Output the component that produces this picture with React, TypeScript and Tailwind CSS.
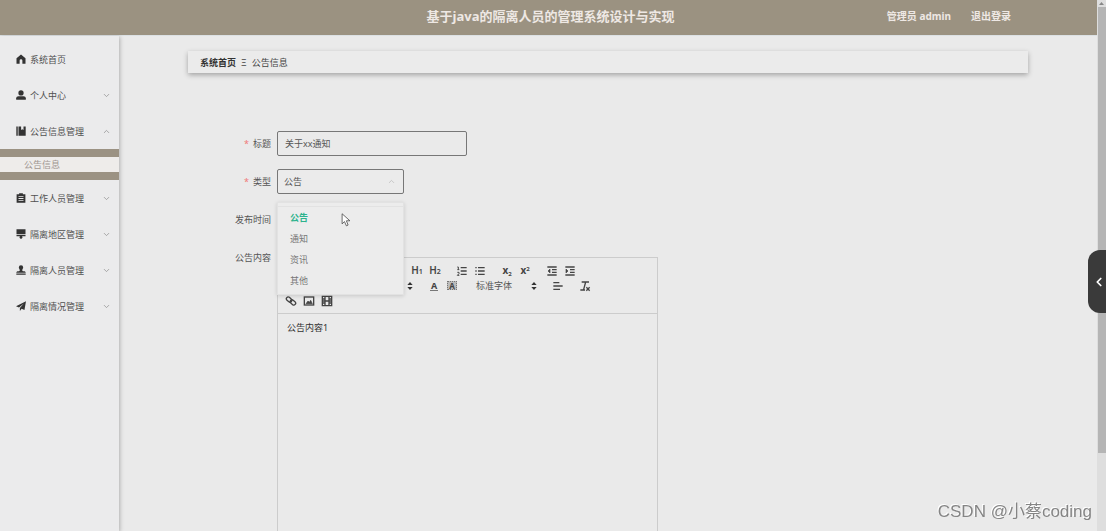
import { useState } from "react";
import type { ReactNode } from "react";
import { ChevronDown, ChevronLeft, ChevronUp } from "lucide-react";

type MenuItem = {
  label: string;
  icon: ReactNode;
  expandable?: boolean;
  children?: string[];
};

const menu: MenuItem[] = [
  {
    label: "系统首页",
    icon: <path d="M8 .8.800 6.800V15.500h5V10.500a2.200 2.200 0 0 1 4.400 0v5h5V6.800z" />,
  },
  {
    label: "个人中心",
    expandable: true,
    icon: (
      <>
        <circle cx="8" cy="4.600" r="4.200" />
        <path d="M.3 15.500v-2.200c0-2 1.600-3.200 3.600-3.200h8.200c2 0 3.600 1.200 3.600 3.200v2.200z" />
      </>
    ),
  },
  {
    label: "公告信息管理",
    expandable: true,
    children: ["公告信息"],
    icon: <path d="M.5.800h2.300V15.500H.500zM4 .800h4.200v5.700l1.900-1.500L12 6.500V.800h3.500V15.500H4z" />,
  },
  {
    label: "工作人员管理",
    expandable: true,
    icon: (
      <path
        fillRule="evenodd"
        d="M5 .3h6V2h4v13.700H1V2h4zM4 5v1.400h8V5zm0 3v1.400h8V8zm0 3v1.400h8V11z"
      />
    ),
  },
  {
    label: "隔离地区管理",
    expandable: true,
    icon: <path d="M.8.500h14.400v7.500H.8zM.8 9.200h14.400v2.300H10v2.200h1L8 16l-3-2.300h1v-2.200H.8z" />,
  },
  {
    label: "隔离人员管理",
    expandable: true,
    icon: (
      <path d="M8 .5a3.500 3.500 0 0 1 3.500 3.500c0 1.700-1.500 2.600-1.500 4.200 0 1.300.7 1.800 2.500 1.800 1.900 0 3 .8 3 2.500H.5C.5 10.800 1.600 10 3.500 10 5.300 10 6 9.500 6 8.200 6 6.600 4.500 5.700 4.500 4A3.500 3.500 0 0 1 8 .5M.5 13.500h15v2H.5z" />
    ),
  },
  {
    label: "隔离情况管理",
    expandable: true,
    icon: <path d="M16 .3 13.500 14.500l-4.500-2-2.800 3.500v-4.700L12.500 4 4.800 10.200 0 8.500z" />,
  },
];

const types = ["公告", "通知", "资讯", "其他"];

function Sidebar() {
  return (
    <aside className="w-[119px] shrink-0 bg-[#ebebec] pt-[5px] shadow-[1px_1px_4px_rgba(0,0,0,0.25)]">
      <nav aria-label="菜单">
        <ul>
          {menu.map((item) => (
            <li key={item.label}>
              <button className="flex h-9 w-full items-center pr-2 pl-4 text-left text-[#505050]">
                <svg viewBox="0 0 16 16" className="mr-1 size-2.5 shrink-0 fill-[#333]">
                  {item.icon}
                </svg>
                <span className="flex-1">{item.label}</span>
                {item.expandable &&
                  (item.children ? (
                    <ChevronUp size={9} strokeWidth={2} className="text-[#909090]" />
                  ) : (
                    <ChevronDown size={9} strokeWidth={2} className="text-[#909090]" />
                  ))}
              </button>
              {item.children && (
                <ul className="bg-[#9b9283] py-2">
                  {item.children.map((child) => (
                    <li key={child}>
                      <a href="#notice" className="flex h-[15px] items-center bg-[#eeecea] pl-6 text-[#a09691]">
                        {child}
                      </a>
                    </li>
                  ))}
                </ul>
              )}
            </li>
          ))}
        </ul>
      </nav>
    </aside>
  );
}

function Tool({ label, children }: { label: string; children: ReactNode }) {
  return (
    <button type="button" aria-label={label} className="flex h-full w-[18px] items-center justify-center">
      {children}
    </button>
  );
}

function Glyph({ children }: { children: ReactNode }) {
  return (
    <svg viewBox="0 0 18 18" className="size-3 fill-none stroke-[#444] stroke-2">
      {children}
    </svg>
  );
}

function Arrows() {
  return (
    <svg viewBox="0 0 18 18" className="size-3 fill-[#333]">
      <path d="M5 7.500 9 3l4 4.500zM5 10.500 9 15l4-4.500z" />
    </svg>
  );
}

function Group({ children }: { children: ReactNode }) {
  return <div className="flex h-full">{children}</div>;
}

function Toolbar() {
  return (
    <div className="border-b border-[#ccc] px-1 pt-[5px] pb-1 text-[#444]">
      <div className="flex h-[15px] gap-[9px]">
        <Group>
          <Tool label="粗体">
            <Glyph><path d="M5 4h5a2.500 2.500 0 0 1 0 5H5zM5 9h6a2.500 2.500 0 0 1 0 5H5z" /></Glyph>
          </Tool>
          <Tool label="斜体">
            <Glyph><path d="M7 4h6M5 14h6M8 14l2-10" /></Glyph>
          </Tool>
          <Tool label="下划线">
            <Glyph><path d="M5 3v6a4 4 0 0 0 8 0V3M4 15.500h10" /></Glyph>
          </Tool>
          <Tool label="删除线">
            <Glyph><path d="M2 9h14M12 5c-3-2-6-1-6 1s6 3 6 6-4 3-7 1" /></Glyph>
          </Tool>
        </Group>
        <Group>
          <Tool label="引用">
            <Glyph><path d="M4 8h3v3H4zc0-3 1-4 3-4M11 8h3v3h-3zc0-3 1-4 3-4" /></Glyph>
          </Tool>
          <Tool label="代码">
            <Glyph><path d="m5 7-3 2 3 2M13 7l3 2-3 2M10 5l-2 8" /></Glyph>
          </Tool>
        </Group>
        <Group>
          <Tool label="标题 1">
            <span className="text-[10px] font-semibold">H<span className="text-[7px]">1</span></span>
          </Tool>
          <Tool label="标题 2">
            <span className="text-[10px] font-semibold">H<span className="text-[7px]">2</span></span>
          </Tool>
        </Group>
        <Group>
          <Tool label="有序列表">
            <Glyph>
              <path d="M7 4h9M7 9h9M7 14h9" />
              <path strokeWidth="1.500" d="M2 3h1.500v4M2 7h3M2 11h2.500v2L2 15.500h3" />
            </Glyph>
          </Tool>
          <Tool label="无序列表">
            <Glyph><path d="M6 4h10M6 9h10M6 14h10M2 4h2M2 9h2M2 14h2" /></Glyph>
          </Tool>
        </Group>
        <Group>
          <Tool label="下标">
            <span className="text-[10px] font-bold">x<sub className="text-[6px]">2</sub></span>
          </Tool>
          <Tool label="上标">
            <span className="text-[10px] font-bold">x<sup className="text-[6px]">2</sup></span>
          </Tool>
        </Group>
        <Group>
          <Tool label="减少缩进">
            <Glyph>
              <path d="M2 3h14M9 7h7M9 11h7M2 15h14" />
              <path className="fill-[#444]" strokeWidth="1" d="M6 6v6L3 9z" />
            </Glyph>
          </Tool>
          <Tool label="增加缩进">
            <Glyph>
              <path d="M2 3h14M9 7h7M9 11h7M2 15h14" />
              <path className="fill-[#444]" strokeWidth="1" d="M3 6v6l3-3z" />
            </Glyph>
          </Tool>
        </Group>
      </div>

      <div className="flex h-[15px] gap-[9px]">
        <button type="button" aria-label="字号" className="flex w-[62px] items-center justify-end">
          <Arrows />
        </button>
        <button type="button" aria-label="标题级别" className="flex w-[63px] items-center justify-end">
          <Arrows />
        </button>
        <Group>
          <Tool label="字体颜色">
            <span className="border-b border-[#777] px-px text-[9px] leading-[9px] font-bold">A</span>
          </Tool>
          <Tool label="背景颜色">
            <span className="border border-dotted border-[#777] bg-[#bbb] px-px text-[8px] leading-[7px] font-bold">A</span>
          </Tool>
        </Group>
        <button type="button" className="flex w-[70px] items-center justify-between pl-1.5 text-[#555]">
          标准字体
          <Arrows />
        </button>
        <Group>
          <Tool label="对齐方式">
            <Glyph><path d="M2 4h9M2 9h14M2 14h10" /></Glyph>
          </Tool>
        </Group>
        <Group>
          <Tool label="清除格式">
            <Glyph><path d="M4 3h11M10 3 7 14M2 15h7M11 11l5 5M16 11l-5 5" /></Glyph>
          </Tool>
        </Group>
      </div>

      <div className="flex h-4 items-center">
        <Tool label="链接">
          <Glyph>
            <rect x="1.500" y="4" width="9" height="5.500" rx="2.700" transform="rotate(40 6 7)" />
            <rect x="7.500" y="8.500" width="9" height="5.500" rx="2.700" transform="rotate(40 12 11)" />
          </Glyph>
        </Tool>
        <Tool label="图片">
          <Glyph>
            <rect x="2" y="3" width="14" height="12" />
            <path className="fill-[#444]" strokeWidth="1" d="m4.500 13 3-4 2 2 2-3 2.500 5z" />
          </Glyph>
        </Tool>
        <Tool label="视频">
          <Glyph>
            <path d="M2 2h14v14H2zM6 2v14M12 2v14M6 9h6M2 6h3M2 9h3M2 12h3M13 6h3M13 9h3M13 12h3" />
          </Glyph>
        </Tool>
      </div>
    </div>
  );
}

function TypeSelect() {
  const [value, setValue] = useState("公告");

  return (
    <div className="relative w-[127px]">
      <select
        id="type"
        value={value}
        onChange={(e) => setValue(e.target.value)}
        className="h-[25px] w-full appearance-none rounded-xs border border-[#777] bg-[#ebebeb] px-1.5 text-[#555] outline-none"
      >
        {types.map((t) => (
          <option key={t}>{t}</option>
        ))}
      </select>
      <ChevronUp size={9} className="pointer-events-none absolute top-2 right-2 text-[#bbb]" />
      <div className="absolute top-full left-0 z-10 mt-2 w-full border border-[#e2e2e2] bg-[#ececec] pt-[3px] shadow-[0_1px_4px_rgba(0,0,0,0.15)]">
        <ul role="listbox" aria-label="类型" className="border-t border-[#e2e2e2] pb-[3px]">
          {types.map((t) => (
            <li
              key={t}
              role="option"
              aria-selected={t === value}
              onClick={() => setValue(t)}
              className={`flex h-[21px] items-center px-3 ${t === value ? "font-bold text-[#2db38c]" : "text-[#777]"}`}
            >
              {t}
            </li>
          ))}
        </ul>
        <svg viewBox="0 0 12 18" className="absolute top-2.5 right-[52px] h-3.5 w-2.5 fill-white stroke-[#444]">
          <path d="M1 1v13l3-3 2.500 5.500 2.200-1L6.500 10H11z" />
        </svg>
      </div>
    </div>
  );
}

function Label({ htmlFor, required, children }: { htmlFor: string; required?: boolean; children: ReactNode }) {
  return (
    <label htmlFor={htmlFor} className="flex h-[25px] w-[89px] shrink-0 items-center justify-end gap-1 pr-1.5 text-[#555]">
      {required && <span className="text-[#f07878]">*</span>}
      {children}
    </label>
  );
}

function NoticeForm() {
  return (
    <form className="mt-[58px] flex flex-1 flex-col gap-[13px]">
      <div className="flex">
        <Label htmlFor="title" required>标题</Label>
        <input
          id="title"
          defaultValue="关于xx通知"
          className="h-[25px] w-[190px] rounded-xs border border-[#777] px-[7px] text-[#555] outline-none"
        />
      </div>
      <div className="flex">
        <Label htmlFor="type" required>类型</Label>
        <TypeSelect />
      </div>
      <div className="flex">
        <Label htmlFor="time">发布时间</Label>
        <input id="time" className="h-[25px] w-[120px] outline-none" />
      </div>
      <div className="flex flex-1">
        <Label htmlFor="content">公告内容</Label>
        <div className="mt-3 flex w-[381px] flex-col border border-b-0 border-[#ccc]">
          <Toolbar />
          <textarea
            id="content"
            defaultValue="公告内容1"
            className="w-full flex-1 resize-none px-[9px] py-1.5 text-[#333] outline-none"
          />
        </div>
      </div>
    </form>
  );
}

function Scrollbar() {
  return (
    <div className="flex w-[9px] shrink-0 flex-col bg-[#dedede]">
      <svg viewBox="0 0 9 7" className="h-[7px] w-full fill-[#888]">
        <path d="M2 5 4.500 2 7 5z" />
      </svg>
      <div className="ml-px h-[84%] bg-[#b5b5b5]" />
    </div>
  );
}

export default function App() {
  return (
    <div className="flex h-screen overflow-hidden bg-[#eaeaea] font-['Noto_Sans','Noto_Sans_CJK_SC',sans-serif] text-[9px] leading-[15px]">
      <div className="flex min-w-0 flex-1 flex-col">
        <header className="z-10 grid h-[35px] shrink-0 grid-cols-[1fr_auto_1fr] items-center bg-[#9b9281] pb-0.5 font-bold text-[#eee8e4]">
          <h1 className="col-start-2 pl-1 font-['Open_Sans','Noto_Sans_CJK_SC',sans-serif] text-[13px]">
            基于java的隔离人员的管理系统设计与实现
          </h1>
          <div className="flex justify-end gap-5 pr-[86px] text-[10px]">
            <span>管理员 admin</span>
            <button>退出登录</button>
          </div>
        </header>
        <div className="flex flex-1 border-t border-[#dce1e4]">
          <Sidebar />
          <main className="flex flex-1 flex-col pt-[15px] pr-[69px] pl-[69px]">
            <nav
              aria-label="面包屑"
              className="flex h-[22px] items-center gap-[5px] bg-[#ebebeb] px-3 text-[#444] shadow-[0_2px_5px_rgba(0,0,0,0.3)]"
            >
              <a href="#home" className="font-bold text-[#333]">系统首页</a>
              <span>Ξ</span>
              <span>公告信息</span>
            </nav>
            <NoticeForm />
          </main>
        </div>
      </div>
      <Scrollbar />

      <button
        aria-label="展开侧栏"
        className="fixed top-[250px] right-0 flex h-[63px] w-[18px] items-center justify-end rounded-l-xl bg-[#3a3a3a] text-white"
      >
        <ChevronLeft size={14} strokeWidth={3} />
      </button>
      <p className="fixed right-3.5 bottom-[7px] font-['Liberation_Sans','Noto_Sans_CJK_SC',sans-serif] text-[17px] leading-6 text-[#858585] [text-shadow:-1px_-1px_0_#fff]">
        CSDN @小蔡coding
      </p>
    </div>
  );
}
